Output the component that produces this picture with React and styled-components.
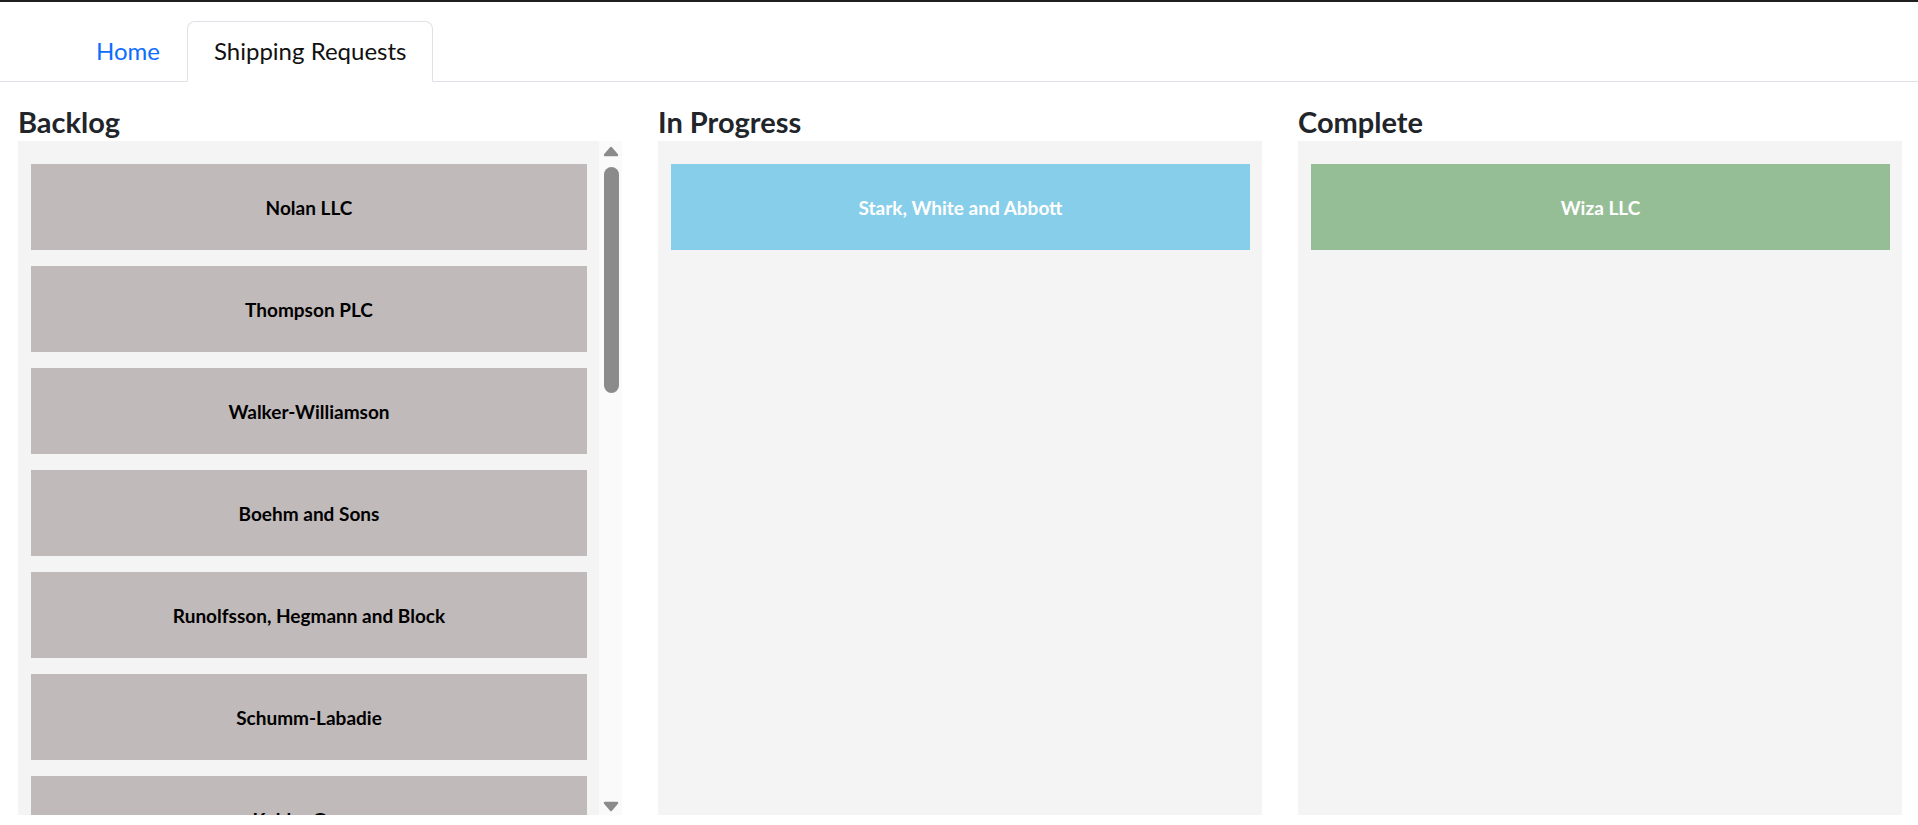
import React from "react";
import styled, { createGlobalStyle } from "styled-components";

const GlobalStyle = createGlobalStyle`
  html, body { margin: 0; padding: 0; background: #fff; }
  body {
    font-family: Lato, "Noto Sans", "Liberation Sans", sans-serif;
    color: #212529;
    border-top: 2px solid #1f1f1f;
    height: 823px;
    overflow: hidden;
  }
  * { box-sizing: border-box; }
`;

const Nav = styled.ul`
  list-style: none;
  margin: 0;
  padding: 19px 0 0 69px;
  display: flex;
  border-bottom: 1px solid #dee2e6;
`;

const TabItem = styled.li`
  margin-bottom: -1px;
`;

const TabLink = styled.a`
  display: block;
  padding: 11px 26px 12px;
  font-size: 24px;
  line-height: 36px;
  text-decoration: none;
  cursor: pointer;
  border: 1px solid ${(p) => (p.$active ? "#dee2e6" : "transparent")};
  border-bottom-color: ${(p) => (p.$active ? "#fff" : "transparent")};
  border-top-left-radius: 8px;
  border-top-right-radius: 8px;
  background: ${(p) => (p.$active ? "#fff" : "transparent")};
  color: ${(p) => (p.$active ? "#111" : "#0d6efd")};
`;

const Board = styled.main`
  display: grid;
  grid-template-columns: repeat(3, 604px);
  column-gap: 36px;
  padding: 22px 16px 0 18px;
`;

const Column = styled.section`
  display: flex;
  flex-direction: column;
`;

const Title = styled.h2`
  margin: 0 0 2px;
  font-size: 29px;
  line-height: 35px;
  font-weight: 700;
  color: #212529;
`;

const Lane = styled.div`
  height: 674px;
  display: flex;
  background: #f4f4f4;
`;

const CardList = styled.div`
  flex: 1;
  min-width: 0;
  display: flex;
  flex-direction: column;
  gap: 16px;
  padding: 23px 12px 23px 13px;
  overflow: hidden;
`;

const Card = styled.div`
  flex: 0 0 86px;
  display: flex;
  align-items: center;
  justify-content: center;
  background: ${(p) => p.$bg};
  color: ${(p) => p.$fg};
  font-size: 19px;
  font-weight: 700;
`;

const ScrollTrack = styled.div`
  flex: 0 0 23px;
  display: flex;
  flex-direction: column;
  align-items: center;
  background: #fafafa;
`;

const ArrowButton = styled.div`
  flex: 0 0 ${(p) => p.$h}px;
  width: 100%;
  display: flex;
  justify-content: center;
  align-items: ${(p) => (p.$down ? "flex-end" : "flex-start")};
  padding: ${(p) => (p.$down ? "0 0 3px" : "5px 0 0")};
`;

const ThumbArea = styled.div`
  flex: 1;
  width: 100%;
  display: flex;
  justify-content: center;
  padding-left: 1px;
`;

const Thumb = styled.div`
  width: 15px;
  border-radius: 8px;
  background: #8b8b8b;
`;

const Triangle = ({ down }) => (
  <svg width="16" height="11" viewBox="0 0 16 11">
    <polygon
      points={down ? "2,2 14,2 8,9" : "8,2 14,9 2,9"}
      fill="#8b8b8b"
      stroke="#8b8b8b"
      strokeWidth="2.5"
      strokeLinejoin="round"
    />
  </svg>
);

const backlog = [
  "Nolan LLC",
  "Thompson PLC",
  "Walker-Williamson",
  "Boehm and Sons",
  "Runolfsson, Hegmann and Block",
  "Schumm-Labadie",
  "Kohler Group",
  "Hettinger Inc",
  "Bins-Kuhic",
  "Mraz, Wisoky and Lind",
  "Torp LLC",
  "Ratke Group",
  "Ernser-Hagenes",
  "Lakin and Sons",
  "Gulgowski PLC",
  "Rempel-Hauck",
  "Feest Inc",
  "Jast, Bode and Kling",
];

const columns = [
  { title: "Backlog", items: backlog, bg: "#c0baba", fg: "#000", scroll: true },
  { title: "In Progress", items: ["Stark, White and Abbott"], bg: "#87ceeb", fg: "#fff" },
  { title: "Complete", items: ["Wiza LLC"], bg: "#96be96", fg: "#fff" },
];

function Scrollbar({ items }) {
  const contentHeight = 46 + items * 86 + (items - 1) * 16;
  const thumb = Math.round((674 / contentHeight) * 626);
  return (
    <ScrollTrack>
      <ArrowButton $h={26}>
        <Triangle />
      </ArrowButton>
      <ThumbArea>
        <Thumb style={{ height: thumb }} />
      </ThumbArea>
      <ArrowButton $h={22} $down>
        <Triangle down />
      </ArrowButton>
    </ScrollTrack>
  );
}

export default function App() {
  return (
    <>
      <GlobalStyle />
      <Nav>
        <TabItem>
          <TabLink>Home</TabLink>
        </TabItem>
        <TabItem>
          <TabLink $active>Shipping Requests</TabLink>
        </TabItem>
      </Nav>
      <Board>
        {columns.map((col) => (
          <Column key={col.title}>
            <Title>{col.title}</Title>
            <Lane>
              <CardList>
                {col.items.map((name) => (
                  <Card key={name} $bg={col.bg} $fg={col.fg}>
                    {name}
                  </Card>
                ))}
              </CardList>
              {col.scroll && <Scrollbar items={col.items.length} />}
            </Lane>
          </Column>
        ))}
      </Board>
    </>
  );
}
